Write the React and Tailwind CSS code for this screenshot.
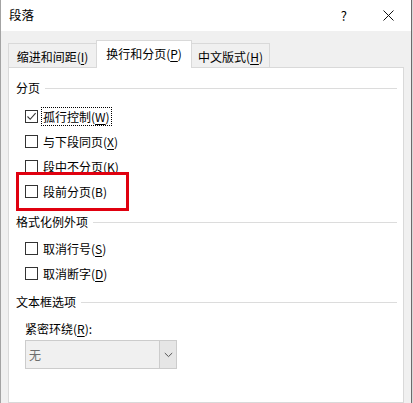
import React from "react";

const font = { fontFamily: '"Noto Sans CJK SC", "Microsoft YaHei", sans-serif' };

function U({ children }) {
  return <span className="underline underline-offset-2 decoration-1">{children}</span>;
}

function Box({ checked }) {
  return (
    <div className="w-[13px] h-[13px] border border-[#333333] bg-white flex items-center justify-center shrink-0">
      {checked && (
        <svg width="11" height="11" viewBox="0 0 11 11">
          <path d="M1.5 5.5 L4.2 8.3 L9.6 2.2" fill="none" stroke="#333" strokeWidth="1.1" />
        </svg>
      )}
    </div>
  );
}

function Row({ checked, children, focus, extra }) {
  return (
    <div className="relative h-[25px] flex items-center pl-[16px]">
      <Box checked={checked} />
      <div
        className={
          "ml-[3px] leading-[17px] px-[1px] " +
          (focus ? "border border-dotted border-black" : "border border-transparent")
        }
      >
        {children}
      </div>
      {extra}
    </div>
  );
}

function Header({ children }) {
  return (
    <div className="h-[20px] flex items-center pl-[7px] pr-[6px]">
      <span className="shrink-0">{children}</span>
      <div className="flex-1 h-px bg-[#dcdcdc] ml-[5px]" />
    </div>
  );
}

export default function App() {
  return (
    <div
      className="w-[413px] h-[403px] overflow-hidden flex text-[12px] text-black"
      style={font}
    >
      <div className="w-[411px] h-full flex flex-col border-l border-[#a3a3a3] bg-[#f0f0f0]">
        <div className="h-[31px] bg-white flex items-center shrink-0">
          <span className="ml-[8px] text-[12.5px]">段落</span>
          <div className="flex-1" />
          <span className="text-[13px] mr-[36px]">?</span>
          <svg width="11" height="11" viewBox="0 0 11 11" className="mr-[17px]">
            <path d="M0.5 0.5 L10.5 10.5 M10.5 0.5 L0.5 10.5" stroke="#111" strokeWidth="1" />
          </svg>
        </div>
        <div className="flex-1 flex flex-col pt-[9px] pl-[7px]">
          <div className="flex items-end h-[28px]">
            <div className="w-[88px] h-[25px] border border-r-0 border-[#d9d9d9] bg-[#f0f0f0] flex items-center justify-center pt-[3px]">
              缩进和间距(<U>I</U>)
            </div>
            <div className="relative z-10 w-[96px] h-[28px] border border-b-0 border-[#d9d9d9] bg-white flex items-center justify-center pb-[1px]">
              换行和分页(<U>P</U>)
            </div>
            <div className="w-[78px] h-[25px] border border-l-0 border-[#d9d9d9] bg-[#f0f0f0] flex items-center justify-center pt-[3px]">
              中文版式(<U>H</U>)
            </div>
          </div>
          <div className="-mt-px w-[396px] flex-1 border border-[#d9d9d9] bg-white pt-[10px]">
            <Header>分页</Header>
            <div className="mt-[6px]">
              <Row checked focus>
                孤行控制(<U>W</U>)
              </Row>
              <Row>
                与下段同页(<U>X</U>)
              </Row>
              <Row>
                段中不分页(<U>K</U>)
              </Row>
              <Row
                extra={
                  <div className="absolute left-[7px] top-[-7px] w-[113px] h-[39px] border-[3px] border-[#e0000f]" />
                }
              >
                段前分页(B)
              </Row>
            </div>
            <div className="mt-[8px]">
              <Header>格式化例外项</Header>
            </div>
            <div className="mt-[4px]">
              <Row>
                取消行号(<U>S</U>)
              </Row>
              <Row>
                取消断字(<U>D</U>)
              </Row>
            </div>
            <div className="mt-[6px]">
              <Header>文本框选项</Header>
            </div>
            <div className="mt-[9px] h-[16px] flex items-center pl-[16px]">
              紧密环绕(<U>R</U>):
            </div>
            <div className="mt-[3px] ml-[16px] w-[152px] h-[29px] border border-[#cccccc] bg-[#f0f0f0] flex">
              <div className="flex-1 flex items-center pl-[3px] text-[#6d6d6d]">无</div>
              <div className="w-[17px] border-l border-[#cccccc] bg-[#e6e6e6] flex items-center justify-center">
                <svg width="9" height="6" viewBox="0 0 9 6">
                  <path d="M0.8 1 L4.5 4.6 L8.2 1" fill="none" stroke="#555" strokeWidth="1" />
                </svg>
              </div>
            </div>
          </div>
        </div>
      </div>
      <div className="w-px h-full bg-[#6b6b6b]" />
      <div className="w-px h-full bg-[#d8d8d8]" />
    </div>
  );
}
